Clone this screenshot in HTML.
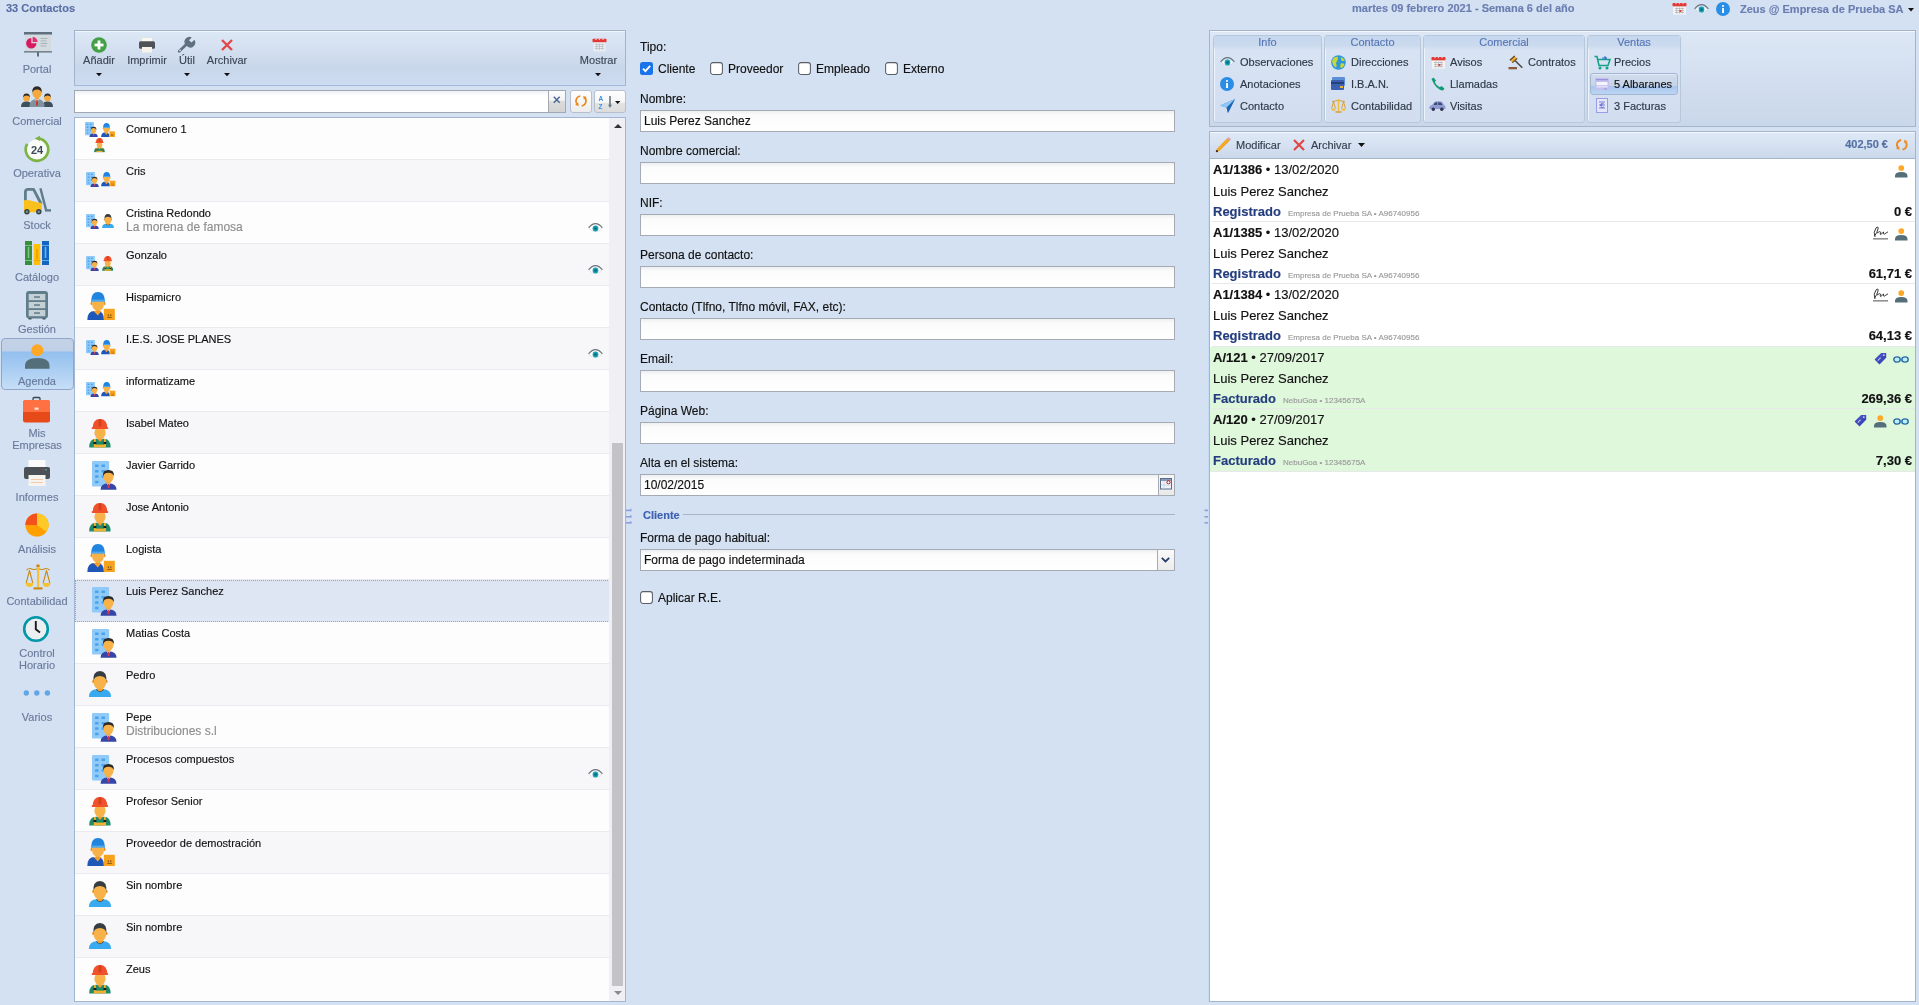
<!DOCTYPE html><html><head><meta charset="utf-8"><style>
html,body{margin:0;padding:0;}
body{width:1919px;height:1005px;overflow:hidden;position:relative;background:#d4e1f2;font-family:"Liberation Sans",sans-serif;}
.t{position:absolute;line-height:1;white-space:nowrap;-webkit-text-stroke-width:0.15px;}
#root{position:absolute;left:0;top:0;width:1919px;height:1005px;will-change:transform;}
.a{position:absolute;box-sizing:border-box;}
svg{position:absolute;overflow:visible;}
</style></head><body>
<svg width="0" height="0" style="position:absolute;left:0;top:0">
<defs>
<symbol id="iA" viewBox="0 0 26 30">
  <rect x="0" y="0" width="17.8" height="26.4" rx="1.3" fill="#8fcaf8"/>
  <g fill="#4aa2ec">
   <rect x="3.2" y="3.6" width="3.6" height="2.6" rx="0.4"/><rect x="9.9" y="3.6" width="3.6" height="2.6" rx="0.4"/>
   <rect x="3.2" y="9.2" width="3.6" height="2.6" rx="0.4"/><rect x="9.9" y="9.2" width="3.6" height="2.6" rx="0.4"/>
   <rect x="3.2" y="14.8" width="3.6" height="2.6" rx="0.4"/><rect x="9.9" y="14.8" width="3.6" height="2.6" rx="0.4"/>
   <rect x="3.2" y="20.4" width="3.6" height="2.6" rx="0.4"/>
  </g>
  <path d="M8.9 29.9 Q8.9 23 17.2 23 Q25.5 23 25.5 29.9Z" fill="#3446a8"/>
  <path d="M15.2 23.1 L17.2 26 L19.2 23.1Z" fill="#fff"/>
  <path d="M16.5 23.8 h1.4 l0.4 3.6 l-1.1 1.2 l-1.1 -1.2Z" fill="#d23c5a"/>
  <rect x="15.2" y="20" width="4" height="3.5" fill="#f29a2e"/>
  <ellipse cx="17.1" cy="16.3" rx="5.2" ry="6.2" fill="#f8b24a"/>
  <path d="M11.6 16 Q10.6 9.3 17.1 9.3 Q23.6 9.3 22.6 16 Q22 12.3 17.1 12.2 Q12.2 12.3 11.6 16Z" fill="#2b2b2b"/>
</symbol>
<symbol id="iB" viewBox="0 0 29 28">
  <path d="M0.3 28 Q0.3 19 7.5 19 h3 Q17 19 17 28Z" fill="#1f57b8"/>
  <path d="M6.5 19 L10.8 23.6 L14.6 19Z" fill="#f2a033"/>
  <rect x="8.8" y="15" width="4" height="5" fill="#f09a2a"/>
  <ellipse cx="4.6" cy="11.6" rx="1.2" ry="1.6" fill="#f09a2a"/><ellipse cx="17.4" cy="11.6" rx="1.2" ry="1.6" fill="#f09a2a"/>
  <ellipse cx="11" cy="12.4" rx="5.9" ry="6.6" fill="#f8b24a"/>
  <path d="M4.6 11 Q4.4 7 5.4 9.5Z M17.4 11 Q17.6 7 16.6 9.5Z" fill="#3a3a3a"/>
  <path d="M4.2 9.2 Q4.2 0 11 0 Q17.8 0 17.8 9.2Z" fill="#2185e0"/>
  <rect x="4.2" y="7.6" width="13.6" height="1.9" fill="#4aaaf2"/>
  <rect x="16.8" y="16.8" width="11" height="11.2" fill="#f7a21c"/>
  <rect x="20.8" y="22.3" width="1" height="2" fill="#7a4a10"/><rect x="23.3" y="22.3" width="1" height="2" fill="#7a4a10"/>
  <rect x="20.3" y="25.1" width="4.5" height="0.8" fill="#7a4a10"/>
</symbol>
<symbol id="iC" viewBox="0 0 22 29">
  <path d="M0.2 28.4 Q0.2 19.7 7 19.7 h8 Q21.6 19.7 21.6 28.4Z" fill="#1e8a6a"/>
  <rect x="4.8" y="25.6" width="12.2" height="2.8" fill="#f3b02c"/>
  <rect x="5" y="20" width="1.8" height="5.8" fill="#f3b02c"/><rect x="15" y="20" width="1.8" height="5.8" fill="#f3b02c"/>
  <rect x="4.5" y="23" width="2.8" height="2" fill="#1b1b1b"/><rect x="14.5" y="23" width="2.8" height="2" fill="#1b1b1b"/>
  <path d="M8 19.7 L11 23 L14 19.7Z" fill="#f09a2a"/>
  <rect x="9" y="16" width="4" height="4.5" fill="#f09a2a"/>
  <ellipse cx="11" cy="13.8" rx="5.6" ry="6.3" fill="#f8b24a"/>
  <path d="M3.6 9.5 Q3.6 0 11 0 Q18.4 0 18.4 9.5Z" fill="#f0512a"/>
  <rect x="9.6" y="0.3" width="2.8" height="7" fill="#d63f1c"/>
  <rect x="2.7" y="8" width="16.5" height="2" rx="0.8" fill="#f0512a"/>
</symbol>
<symbol id="iD" viewBox="0 0 22 27">
  <path d="M0 26 Q0 18.3 8 18.3 h6 Q22 18.3 22 26Z" fill="#3aaaf0"/>
  <path d="M6.8 18.3 Q11 24 15.2 18.3Z" fill="#17425a"/>
  <path d="M7.8 18.4 Q11 22.4 14.2 18.4 L13.6 14 h-5.2Z" fill="#f09a2a"/>
  <ellipse cx="4.3" cy="10.6" rx="1.2" ry="1.6" fill="#f09a2a"/><ellipse cx="17.5" cy="10.6" rx="1.2" ry="1.6" fill="#f09a2a"/>
  <ellipse cx="10.9" cy="11" rx="6.3" ry="7.4" fill="#f8b24a"/>
  <path d="M4.4 11 Q3.6 0 10.9 0 Q18.2 0 17.4 11 Q17 5.2 10.9 5 Q4.8 5.2 4.4 11Z" fill="#363d42"/>
</symbol>
</defs></svg>
<div id="root">
<div class="t" style="left:6px;top:2.69px;font-size:11px;color:#5a6ea4;font-weight:bold;">33 Contactos</div>
<div class="t" style="left:1352px;top:2.69px;font-size:11px;color:#6a7db0;font-weight:bold;">martes 09 febrero 2021 - Semana 6 del año</div>
<div class="t" style="left:1740px;top:3.69px;font-size:11px;color:#6a7db0;font-weight:bold;">Zeus @ Empresa de Prueba SA</div>
<svg style="left:1907.5px;top:8px" width="6" height="3.5" viewBox="0 0 6 3.5"><path d="M0 0H6L3 3.5Z" fill="#111"/></svg>
<svg style="left:1672px;top:2px" width="15" height="13" viewBox="0 0 15 13"><rect x="0.5" y="1" width="14" height="3.6" rx="0.8" fill="#e53935"/>
<circle cx="4" cy="1.6" r="0.7" fill="#fbe4e4"/><circle cx="7.5" cy="1.6" r="0.7" fill="#fbe4e4"/><circle cx="11" cy="1.6" r="0.7" fill="#fbe4e4"/>
<rect x="1" y="4.6" width="13" height="8" fill="#f3f3f3"/>
<g fill="#a9a9a9"><rect x="3" y="6" width="9" height="0.6"/><rect x="3" y="8.2" width="9" height="0.6"/><rect x="3" y="10.4" width="9" height="0.6"/>
<rect x="4.5" y="5.5" width="0.6" height="6"/><rect x="7.2" y="5.5" width="0.6" height="6"/><rect x="9.9" y="5.5" width="0.6" height="6"/></g>
<rect x="7.5" y="8" width="1.8" height="2" fill="#e53935"/></svg>
<svg style="left:1694px;top:3.8px" width="15.0" height="10.0" viewBox="0 0 15 10"><path d="M1.5 5.6 Q7.5 11.2 13.5 5.6" fill="none" stroke="#c9cdd2" stroke-width="0.7"/>
<path d="M2 5.4 Q7.5 0.5 13 5.4 Q7.5 10.5 2 5.4Z" fill="#fff"/>
<path d="M0.6 4.9 Q7.5 -3.6 14.4 4.9" fill="none" stroke="#6a737a" stroke-width="1.1"/>
<circle cx="7.5" cy="5.5" r="2.9" fill="#14a3b6"/><circle cx="7.5" cy="5.5" r="1.3" fill="#0a6776"/></svg>
<svg style="left:1716px;top:2px" width="14" height="14" viewBox="0 0 14 14"><circle cx="7" cy="7" r="7" fill="#2a8de6"/><rect x="6.1" y="6" width="1.9" height="5" fill="#fff"/><circle cx="7" cy="4" r="1.05" fill="#fff"/></svg>
<div class="a" style="left:1px;top:338px;width:73px;height:52px;border:1px solid #91a7c9;border-radius:4px;background:linear-gradient(#c3d2e6 0,#c0d0e6 12px,#93c0ef 13px,#a9cdf2 30px,#c6def7 100%);"></div>
<div class="t" style="left:-63px;width:200px;text-align:center;top:63.69px;font-size:11px;color:#6a7a9c;">Portal</div>
<div class="t" style="left:-63px;width:200px;text-align:center;top:115.69px;font-size:11px;color:#6a7a9c;">Comercial</div>
<div class="t" style="left:-63px;width:200px;text-align:center;top:167.69px;font-size:11px;color:#6a7a9c;">Operativa</div>
<div class="t" style="left:-63px;width:200px;text-align:center;top:219.69px;font-size:11px;color:#6a7a9c;">Stock</div>
<div class="t" style="left:-63px;width:200px;text-align:center;top:271.69px;font-size:11px;color:#6a7a9c;">Catálogo</div>
<div class="t" style="left:-63px;width:200px;text-align:center;top:323.69px;font-size:11px;color:#6a7a9c;">Gestión</div>
<div class="t" style="left:-63px;width:200px;text-align:center;top:375.69px;font-size:11px;color:#6a7a9c;">Agenda</div>
<div class="t" style="left:-63px;width:200px;text-align:center;top:427.69px;font-size:11px;color:#6a7a9c;">Mis</div>
<div class="t" style="left:-63px;width:200px;text-align:center;top:439.69px;font-size:11px;color:#6a7a9c;">Empresas</div>
<div class="t" style="left:-63px;width:200px;text-align:center;top:491.69px;font-size:11px;color:#6a7a9c;">Informes</div>
<div class="t" style="left:-63px;width:200px;text-align:center;top:543.69px;font-size:11px;color:#6a7a9c;">Análisis</div>
<div class="t" style="left:-63px;width:200px;text-align:center;top:595.69px;font-size:11px;color:#6a7a9c;">Contabilidad</div>
<div class="t" style="left:-63px;width:200px;text-align:center;top:647.69px;font-size:11px;color:#6a7a9c;">Control</div>
<div class="t" style="left:-63px;width:200px;text-align:center;top:659.69px;font-size:11px;color:#6a7a9c;">Horario</div>
<div class="t" style="left:-63px;width:200px;text-align:center;top:711.69px;font-size:11px;color:#6a7a9c;">Varios</div>
<svg style="left:24px;top:32px" width="28" height="25" viewBox="0 0 28 25"><rect x="0" y="0" width="28" height="2.7" fill="#5f707c"/>
<rect x="1" y="2.7" width="26" height="16.5" fill="#d3dbe0"/>
<path d="M7.3 11.3 V6.1 A5.2 5.2 0 1 0 12.5 11.3Z" fill="#d81b60"/>
<path d="M8.6 10 V5 A5 5 0 0 1 13.6 10Z" fill="#e0306e"/>
<g fill="#a3aeb5"><rect x="16.5" y="6" width="7" height="0.9"/><rect x="16.5" y="8.5" width="6" height="0.9"/><rect x="16.5" y="11" width="7" height="0.9"/><rect x="16.5" y="13.5" width="6" height="0.9"/></g>
<rect x="0" y="19.2" width="28" height="1.3" fill="#5f707c"/>
<rect x="13" y="20" width="2" height="4.5" fill="#5f707c"/></svg>
<svg style="left:21px;top:86px" width="32" height="21" viewBox="0 0 32 21"><g>
<ellipse cx="5.5" cy="12" rx="3.3" ry="3.6" fill="#f5a83c"/><path d="M2.2 11.5 Q2 7.6 5.5 7.6 Q9 7.6 8.8 11.5 Q8.2 9.6 5.5 9.5 Q2.8 9.6 2.2 11.5Z" fill="#2b2b2b"/>
<path d="M0 21 Q0 15.6 5.5 15.6 Q11 15.6 11 21Z" fill="#3d4f5a"/>
<ellipse cx="26.5" cy="12" rx="3.3" ry="3.6" fill="#f5a83c"/><path d="M23.2 11.5 Q23 7.6 26.5 7.6 Q30 7.6 29.8 11.5 Q29.2 9.6 26.5 9.5 Q23.8 9.6 23.2 11.5Z" fill="#2b2b2b"/>
<path d="M21 21 Q21 15.6 26.5 15.6 Q32 15.6 32 21Z" fill="#3d4f5a"/>
<path d="M8.5 21 Q8.5 13 16 13 Q23.5 13 23.5 21Z" fill="#7d939e"/>
<path d="M14 13.2 L16 16.5 L18 13.2Z" fill="#fff"/><path d="M15.3 14 h1.4 l0.4 4.8 l-1.1 1.2 l-1.1 -1.2Z" fill="#d32f2f"/>
<rect x="14.2" y="10" width="3.6" height="3.5" fill="#ee9a2e"/>
<ellipse cx="16" cy="7.2" rx="4.6" ry="5" fill="#f5a83c"/>
<path d="M11.2 7 Q10.8 0.3 16 0.3 Q21.2 0.3 20.8 7 Q20 3.6 16 3.5 Q12 3.6 11.2 7Z" fill="#2b2b2b"/>
</g></svg>
<svg style="left:24px;top:136px" width="26" height="26" viewBox="0 0 26 26"><circle cx="13" cy="13.5" r="10.2" fill="#f8fbf6"/>
<path d="M14.5 2.3 A11.3 11.3 0 1 1 3.2 7.85" fill="none" stroke="#7cb342" stroke-width="2.7"/>
<path d="M10.6 2.4 L16 -0.3 L16 5.1Z" fill="#7cb342"/>
<text x="13" y="17.6" text-anchor="middle" font-family="Liberation Sans" font-weight="bold" font-size="11" fill="#3d4a5c">24</text></svg>
<svg style="left:24px;top:188px" width="27" height="27" viewBox="0 0 27 27"><path d="M1.4 13 V4 Q1.4 1.4 4 1.4 H9.6 L17.2 16" fill="none" stroke="#607d8b" stroke-width="2.8" stroke-linejoin="round"/>
<path d="M16.4 0.2 L22.2 22.4" fill="none" stroke="#607d8b" stroke-width="2.4"/>
<rect x="21" y="21.2" width="6" height="2.4" fill="#607d8b"/>
<path d="M0 12.2 Q4.5 11.6 8 13 Q12.5 14.6 17.8 15 V24.3 H0Z" fill="#fbbf1c"/>
<circle cx="2.9" cy="23.7" r="2.7" fill="#33444c"/><circle cx="2.9" cy="23.7" r="1.2" fill="#7d8f99"/>
<circle cx="14.8" cy="23.7" r="2.7" fill="#33444c"/><circle cx="14.8" cy="23.7" r="1.2" fill="#7d8f99"/></svg>
<svg style="left:25px;top:241px" width="24" height="24" viewBox="0 0 24 24"><rect x="0" y="0" width="7" height="24" fill="#388e3c"/><rect x="2.7" y="6" width="1.6" height="11" fill="#7cc47f"/>
<rect x="0" y="4" width="7" height="0.9" fill="#8bc78e"/><rect x="0" y="19" width="7" height="0.9" fill="#8bc78e"/>
<rect x="8.7" y="3" width="6.6" height="21" fill="#ffc107"/><rect x="11.2" y="8" width="1.6" height="10" fill="#f59a00"/>
<rect x="8.7" y="19" width="6.6" height="0.9" fill="#f5a000"/>
<rect x="17" y="0" width="7" height="24" fill="#1565c0"/><rect x="19.7" y="6" width="1.6" height="11" fill="#64b5f6"/>
<rect x="17" y="4" width="7" height="0.9" fill="#64b5f6"/><rect x="17" y="19" width="7" height="0.9" fill="#64b5f6"/></svg>
<svg style="left:26px;top:291px" width="22" height="29" viewBox="0 0 22 29"><rect x="0" y="0" width="22" height="27.5" rx="3" fill="#607d8b"/>
<rect x="2.7" y="3" width="16.6" height="6.2" fill="#c5cfd6"/><rect x="2.7" y="11" width="16.6" height="6.2" fill="#c5cfd6"/><rect x="2.7" y="19" width="16.6" height="6.2" fill="#c5cfd6"/>
<rect x="8" y="5.3" width="6" height="1.5" fill="#607d8b"/><rect x="8" y="13.3" width="6" height="1.5" fill="#607d8b"/><rect x="8" y="21.3" width="6" height="1.5" fill="#607d8b"/>
<rect x="2.5" y="27" width="3" height="1.5" fill="#455a64"/><rect x="16.5" y="27" width="3" height="1.5" fill="#455a64"/></svg>
<svg style="left:25px;top:344px" width="25" height="25" viewBox="0 0 25 25"><circle cx="12.3" cy="6.2" r="6" fill="#ffa726"/>
<path d="M0 24.8 V22 Q0 14 12.3 14 Q24.5 14 24.5 22 V24.8Z" fill="#546e7a"/></svg>
<svg style="left:23px;top:397px" width="27" height="26" viewBox="0 0 27 26"><path d="M10 3.5 V1.6 Q10 0.5 11.1 0.5 H15.9 Q17 0.5 17 1.6 V3.5" fill="none" stroke="#37474f" stroke-width="1.3"/>
<rect x="0" y="3" width="27" height="22.5" rx="2.5" fill="#e64a19"/>
<rect x="0" y="3" width="27" height="12" rx="2.5" fill="#ff7043"/><rect x="0" y="12" width="27" height="3" fill="#ff7043"/>
<rect x="11.5" y="10.5" width="4" height="2.3" fill="#fde2d6"/></svg>
<svg style="left:24px;top:460px" width="26" height="26" viewBox="0 0 26 26"><rect x="4.5" y="0" width="17" height="8" fill="#fafafa"/>
<rect x="0" y="7" width="26" height="12" rx="2" fill="#4a5056"/>
<circle cx="22" cy="9.8" r="0.8" fill="#3ecfb0"/><rect x="18" y="9.3" width="2" height="0.8" fill="#b04848"/>
<rect x="4.5" y="15" width="17" height="11" fill="#f7f3ee"/>
<rect x="7" y="19" width="12" height="1" fill="#f3c9a8"/><rect x="7" y="22" width="12" height="1" fill="#f3c9a8"/></svg>
<svg style="left:25px;top:513px" width="24" height="24" viewBox="0 0 24 24"><circle cx="12" cy="12" r="11.6" fill="#ffa000"/>
<path d="M12 12 V0.4 A11.6 11.6 0 0 1 21.4 18.8Z" fill="#ffca28"/>
<path d="M12 12 H0.4 A11.6 11.6 0 0 1 12 0.4Z" fill="#f4511e"/></svg>
<svg style="left:25px;top:564px" width="26" height="26" viewBox="0 0 26 26"><g fill="none" stroke="#c98a14" stroke-width="1.1">
<path d="M1.5 6 Q4 4 6 4.8 Q9 6.3 13 4.5 Q17 6.3 20 4.8 Q22 4 24.5 6"/>
<path d="M4.5 6.5 L1.2 19 M4.5 6.5 L7.8 19 M21.5 6.5 L18.2 19 M21.5 6.5 L24.8 19"/></g>
<circle cx="13" cy="2" r="1.8" fill="#c98a14"/>
<rect x="12" y="3" width="2.2" height="20" fill="#fbc02d"/>
<path d="M0.5 19 H8.5 Q8 23 4.5 23 Q1 23 0.5 19Z" fill="#fbc02d"/>
<path d="M17.5 19 H25.5 Q25 23 21.5 23 Q18 23 17.5 19Z" fill="#fbc02d"/>
<rect x="8.5" y="23.3" width="9" height="2.2" fill="#c98a14"/></svg>
<svg style="left:23px;top:616px" width="26" height="26" viewBox="0 0 26 26"><circle cx="13" cy="13" r="11.8" fill="#eceff1" stroke="#0097a7" stroke-width="2.6"/>
<path d="M12.8 5 V13.2 L17 16.5" fill="none" stroke="#1b1b1b" stroke-width="1.9"/></svg>
<svg style="left:23px;top:690px" width="28" height="6" viewBox="0 0 28 6"><circle cx="3.3" cy="3" r="2.7" fill="#62a6e6"/><circle cx="13.8" cy="3" r="2.7" fill="#62a6e6"/><circle cx="24.4" cy="3" r="2.7" fill="#62a6e6"/></svg>
<div class="a" style="left:74px;top:30px;width:552px;height:56px;border:1px solid #a3b3c9;border-bottom-color:#a2b9dc;background:linear-gradient(#dde8f6 0%,#d5e1f1 30%,#c9d7eb 68%,#cddcf1 100%);box-shadow:inset 0 1px 0 #eef5fc;"></div>
<div class="t" style="left:-1px;width:200px;text-align:center;top:54.69px;font-size:11px;color:#3b4757;">Añadir</div>
<svg style="left:95.5px;top:73px" width="6" height="3.2" viewBox="0 0 6 3.2"><path d="M0 0H6L3 3.2Z" fill="#111"/></svg>
<div class="t" style="left:47px;width:200px;text-align:center;top:54.69px;font-size:11px;color:#3b4757;">Imprimir</div>
<div class="t" style="left:87px;width:200px;text-align:center;top:54.69px;font-size:11px;color:#3b4757;">Útil</div>
<svg style="left:183.5px;top:73px" width="6" height="3.2" viewBox="0 0 6 3.2"><path d="M0 0H6L3 3.2Z" fill="#111"/></svg>
<div class="t" style="left:127px;width:200px;text-align:center;top:54.69px;font-size:11px;color:#3b4757;">Archivar</div>
<svg style="left:223.5px;top:73px" width="6" height="3.2" viewBox="0 0 6 3.2"><path d="M0 0H6L3 3.2Z" fill="#111"/></svg>
<div class="t" style="left:498.5px;width:200px;text-align:center;top:54.69px;font-size:11px;color:#3b4757;">Mostrar</div>
<svg style="left:595.0px;top:73px" width="6" height="3.2" viewBox="0 0 6 3.2"><path d="M0 0H6L3 3.2Z" fill="#111"/></svg>
<svg style="left:91px;top:37px" width="16" height="16" viewBox="0 0 16 16"><circle cx="8" cy="8" r="7.8" fill="#43a047"/><rect x="6.6" y="3.5" width="2.8" height="9" fill="#fff"/><rect x="3.5" y="6.6" width="9" height="2.8" fill="#fff"/></svg>
<svg style="left:139px;top:38px" width="16" height="15" viewBox="0 0 16 15"><rect x="3" y="0" width="10" height="4" fill="#faf7ee"/>
<rect x="0" y="3.3" width="16" height="7.5" rx="1.5" fill="#4f5357"/>
<rect x="3" y="9" width="10" height="5.5" fill="#f7f3ea"/></svg>
<svg style="left:178px;top:37px" width="17" height="16" viewBox="0 0 17 16"><path d="M1.2 14.2 L8.5 7.2" stroke="#5f7180" stroke-width="2.8" stroke-linecap="round"/>
<path d="M7.3 7.6 A5 5 0 0 1 13.8 0.4 L11 3.3 L13.5 5.6 L16.4 2.8 A5 5 0 0 1 9.3 9.6Z" fill="#5f7180"/>
<circle cx="2" cy="13.4" r="0.8" fill="#e7edf4"/></svg>
<svg style="left:221px;top:39px" width="12" height="12" viewBox="0 0 12 12"><path d="M1 1L11 11M11 1L1 11" stroke="#e04848" stroke-width="2.4"/></svg>
<svg style="left:592px;top:37.5px" width="15" height="14" viewBox="0 0 15 14"><rect x="0.5" y="0.8" width="14" height="3.6" rx="0.8" fill="#e53935"/>
<circle cx="4" cy="1.4" r="0.6" fill="#fbe4e4"/><circle cx="7.5" cy="1.4" r="0.6" fill="#fbe4e4"/><circle cx="11" cy="1.4" r="0.6" fill="#fbe4e4"/>
<rect x="1.5" y="4.4" width="12" height="9" fill="#e9edf1"/>
<g fill="#aeb8c0"><rect x="3" y="6" width="9" height="0.6"/><rect x="3" y="8.2" width="9" height="0.6"/><rect x="3" y="10.4" width="9" height="0.6"/>
<rect x="4.5" y="5.5" width="0.6" height="6.5"/><rect x="7.2" y="5.5" width="0.6" height="6.5"/><rect x="9.9" y="5.5" width="0.6" height="6.5"/></g></svg>
<div class="a" style="left:74px;top:90px;width:475px;height:23px;border:1px solid #a3a9b2;border-right:none;background:linear-gradient(#eef0f3 0,#fff 5px,#fff 100%);"></div>
<div class="a" style="left:548px;top:90px;width:18px;height:23px;border:1px solid #a3a9b2;background:linear-gradient(#fdfdfd 0,#f3f3f3 45%,#dcdcdc 46%,#d3d3d3 100%);"></div>
<svg style="left:553px;top:96px" width="7.5" height="7.5" viewBox="0 0 7.5 7.5"><path d="M0.8 0.8L6.7 6.7M6.7 0.8L0.8 6.7" stroke="#486a98" stroke-width="1.5"/></svg>
<div class="a" style="left:570px;top:90px;width:22px;height:23px;border:1px solid #b9bfc8;border-radius:3px;background:linear-gradient(#fefefe 0,#f7f7f7 50%,#ececec 100%);"></div>
<svg style="left:573.8px;top:94.3px" width="14" height="14" viewBox="0 0 14 14"><path d="M6.30 2.05 A5 5 0 0 0 3.28 10.35" fill="none" stroke="#ea8a1e" stroke-width="1.6"/><path d="M4.78 12.01 L1.16 10.97 L4.13 8.29Z" fill="#ea8a1e"/><path d="M7.70 11.95 A5 5 0 0 0 10.72 3.65" fill="none" stroke="#ea8a1e" stroke-width="1.6"/><path d="M9.22 1.99 L12.84 3.03 L9.87 5.71Z" fill="#ea8a1e"/></svg>
<div class="a" style="left:594px;top:90px;width:32px;height:23px;border:1px solid #b9bfc8;border-radius:3px;background:linear-gradient(#fefefe 0,#f7f7f7 54%,#e4e4e4 57%,#dcdcdc 100%);"></div>
<div class="t" style="left:598.6px;top:95.3px;font-size:6.5px;font-weight:bold;color:#3d90e2;line-height:7.5px;-webkit-text-stroke-width:0;">A<br>Z</div>
<svg style="left:607.6px;top:95.7px" width="4" height="12" viewBox="0 0 4 12"><rect x="1.2" y="0" width="1.6" height="9.5" fill="#6b7780"/><path d="M0 8.8H4L2 12Z" fill="#6b7780"/></svg>
<svg style="left:614.8px;top:101px" width="5.4" height="3" viewBox="0 0 5.4 3"><path d="M0 0H5.4L2.7 3Z" fill="#111"/></svg>
<div class="a" style="left:74px;top:117px;width:552px;height:885px;border:1px solid #a2b6d2;background:#fff;"></div>
<div class="a" style="left:75px;top:118px;width:534px;height:42px;background:#fdfdfe;border-bottom:1px solid #ebebef;"></div>
<div class="t" style="left:126px;top:123.69px;font-size:11px;color:#111;">Comunero 1</div>
<svg style="left:84.5px;top:122px" width="13" height="15"><use href="#iA" width="13" height="15"/></svg>
<svg style="left:101px;top:123px" width="14.5" height="14"><use href="#iB" width="14.5" height="14"/></svg>
<svg style="left:94px;top:138px" width="11" height="14.5"><use href="#iC" width="11" height="14.5"/></svg>
<div class="a" style="left:75px;top:160px;width:534px;height:42px;background:#f7f7fa;border-bottom:1px solid #ebebef;"></div>
<div class="t" style="left:126px;top:165.69px;font-size:11px;color:#111;">Cris</div>
<svg style="left:85.5px;top:172px" width="13" height="15"><use href="#iA" width="13" height="15"/></svg>
<svg style="left:100.5px;top:172px" width="15" height="14.5"><use href="#iB" width="15" height="14.5"/></svg>
<div class="a" style="left:75px;top:202px;width:534px;height:42px;background:#fdfdfe;border-bottom:1px solid #ebebef;"></div>
<div class="t" style="left:126px;top:207.69px;font-size:11px;color:#111;">Cristina Redondo</div>
<div class="t" style="left:126px;top:220.84px;font-size:12px;color:#8f8f8f;">La morena de famosa</div>
<svg style="left:85.5px;top:214px" width="13" height="15"><use href="#iA" width="13" height="15"/></svg>
<svg style="left:101.5px;top:214px" width="12" height="14.5"><use href="#iD" width="12" height="14.5"/></svg>
<svg style="left:588px;top:223px" width="15.0" height="10.0" viewBox="0 0 15 10"><path d="M1.5 5.6 Q7.5 11.2 13.5 5.6" fill="none" stroke="#c9cdd2" stroke-width="0.7"/>
<path d="M2 5.4 Q7.5 0.5 13 5.4 Q7.5 10.5 2 5.4Z" fill="#fff"/>
<path d="M0.6 4.9 Q7.5 -3.6 14.4 4.9" fill="none" stroke="#6a737a" stroke-width="1.1"/>
<circle cx="7.5" cy="5.5" r="2.9" fill="#14a3b6"/><circle cx="7.5" cy="5.5" r="1.3" fill="#0a6776"/></svg>
<div class="a" style="left:75px;top:244px;width:534px;height:42px;background:#f7f7fa;border-bottom:1px solid #ebebef;"></div>
<div class="t" style="left:126px;top:249.69px;font-size:11px;color:#111;">Gonzalo</div>
<svg style="left:85.5px;top:256px" width="13" height="15"><use href="#iA" width="13" height="15"/></svg>
<svg style="left:101.5px;top:256px" width="11.5" height="15"><use href="#iC" width="11.5" height="15"/></svg>
<svg style="left:588px;top:265px" width="15.0" height="10.0" viewBox="0 0 15 10"><path d="M1.5 5.6 Q7.5 11.2 13.5 5.6" fill="none" stroke="#c9cdd2" stroke-width="0.7"/>
<path d="M2 5.4 Q7.5 0.5 13 5.4 Q7.5 10.5 2 5.4Z" fill="#fff"/>
<path d="M0.6 4.9 Q7.5 -3.6 14.4 4.9" fill="none" stroke="#6a737a" stroke-width="1.1"/>
<circle cx="7.5" cy="5.5" r="2.9" fill="#14a3b6"/><circle cx="7.5" cy="5.5" r="1.3" fill="#0a6776"/></svg>
<div class="a" style="left:75px;top:286px;width:534px;height:42px;background:#fdfdfe;border-bottom:1px solid #ebebef;"></div>
<div class="t" style="left:126px;top:291.69px;font-size:11px;color:#111;">Hispamicro</div>
<svg style="left:86.5px;top:292px" width="29" height="28"><use href="#iB" width="29" height="28"/></svg>
<div class="a" style="left:75px;top:328px;width:534px;height:42px;background:#f7f7fa;border-bottom:1px solid #ebebef;"></div>
<div class="t" style="left:126px;top:333.69px;font-size:11px;color:#111;">I.E.S. JOSE PLANES</div>
<svg style="left:85.5px;top:340px" width="13" height="15"><use href="#iA" width="13" height="15"/></svg>
<svg style="left:100.5px;top:340px" width="15" height="14.5"><use href="#iB" width="15" height="14.5"/></svg>
<svg style="left:588px;top:349px" width="15.0" height="10.0" viewBox="0 0 15 10"><path d="M1.5 5.6 Q7.5 11.2 13.5 5.6" fill="none" stroke="#c9cdd2" stroke-width="0.7"/>
<path d="M2 5.4 Q7.5 0.5 13 5.4 Q7.5 10.5 2 5.4Z" fill="#fff"/>
<path d="M0.6 4.9 Q7.5 -3.6 14.4 4.9" fill="none" stroke="#6a737a" stroke-width="1.1"/>
<circle cx="7.5" cy="5.5" r="2.9" fill="#14a3b6"/><circle cx="7.5" cy="5.5" r="1.3" fill="#0a6776"/></svg>
<div class="a" style="left:75px;top:370px;width:534px;height:42px;background:#fdfdfe;border-bottom:1px solid #ebebef;"></div>
<div class="t" style="left:126px;top:375.69px;font-size:11px;color:#111;">informatizame</div>
<svg style="left:85.5px;top:382px" width="13" height="15"><use href="#iA" width="13" height="15"/></svg>
<svg style="left:100.5px;top:382px" width="15" height="14.5"><use href="#iB" width="15" height="14.5"/></svg>
<div class="a" style="left:75px;top:412px;width:534px;height:42px;background:#f7f7fa;border-bottom:1px solid #ebebef;"></div>
<div class="t" style="left:126px;top:417.69px;font-size:11px;color:#111;">Isabel Mateo</div>
<svg style="left:89px;top:418.5px" width="22" height="29"><use href="#iC" width="22" height="29"/></svg>
<div class="a" style="left:75px;top:454px;width:534px;height:42px;background:#fdfdfe;border-bottom:1px solid #ebebef;"></div>
<div class="t" style="left:126px;top:459.69px;font-size:11px;color:#111;">Javier Garrido</div>
<svg style="left:91.5px;top:461px" width="25" height="29"><use href="#iA" width="25" height="29"/></svg>
<div class="a" style="left:75px;top:496px;width:534px;height:42px;background:#f7f7fa;border-bottom:1px solid #ebebef;"></div>
<div class="t" style="left:126px;top:501.69px;font-size:11px;color:#111;">Jose Antonio</div>
<svg style="left:89px;top:502.5px" width="22" height="29"><use href="#iC" width="22" height="29"/></svg>
<div class="a" style="left:75px;top:538px;width:534px;height:42px;background:#fdfdfe;border-bottom:1px solid #ebebef;"></div>
<div class="t" style="left:126px;top:543.69px;font-size:11px;color:#111;">Logista</div>
<svg style="left:86.5px;top:544px" width="29" height="28"><use href="#iB" width="29" height="28"/></svg>
<div class="a" style="left:75px;top:580px;width:535px;height:42px;background:linear-gradient(#dde5f2,#dfe7f5);border:1px dotted #98a3bd;"></div>
<div class="t" style="left:126px;top:585.69px;font-size:11px;color:#111;">Luis Perez Sanchez</div>
<svg style="left:91.5px;top:587px" width="25" height="29"><use href="#iA" width="25" height="29"/></svg>
<div class="a" style="left:75px;top:622px;width:534px;height:42px;background:#fdfdfe;border-bottom:1px solid #ebebef;"></div>
<div class="t" style="left:126px;top:627.69px;font-size:11px;color:#111;">Matias Costa</div>
<svg style="left:91.5px;top:629px" width="25" height="29"><use href="#iA" width="25" height="29"/></svg>
<div class="a" style="left:75px;top:664px;width:534px;height:42px;background:#f7f7fa;border-bottom:1px solid #ebebef;"></div>
<div class="t" style="left:126px;top:669.69px;font-size:11px;color:#111;">Pedro</div>
<svg style="left:89px;top:670.5px" width="22" height="27"><use href="#iD" width="22" height="27"/></svg>
<div class="a" style="left:75px;top:706px;width:534px;height:42px;background:#fdfdfe;border-bottom:1px solid #ebebef;"></div>
<div class="t" style="left:126px;top:711.69px;font-size:11px;color:#111;">Pepe</div>
<div class="t" style="left:126px;top:724.84px;font-size:12px;color:#8f8f8f;">Distribuciones s.l</div>
<svg style="left:91.5px;top:713px" width="25" height="29"><use href="#iA" width="25" height="29"/></svg>
<div class="a" style="left:75px;top:748px;width:534px;height:42px;background:#f7f7fa;border-bottom:1px solid #ebebef;"></div>
<div class="t" style="left:126px;top:753.69px;font-size:11px;color:#111;">Procesos compuestos</div>
<svg style="left:91.5px;top:755px" width="25" height="29"><use href="#iA" width="25" height="29"/></svg>
<svg style="left:588px;top:769px" width="15.0" height="10.0" viewBox="0 0 15 10"><path d="M1.5 5.6 Q7.5 11.2 13.5 5.6" fill="none" stroke="#c9cdd2" stroke-width="0.7"/>
<path d="M2 5.4 Q7.5 0.5 13 5.4 Q7.5 10.5 2 5.4Z" fill="#fff"/>
<path d="M0.6 4.9 Q7.5 -3.6 14.4 4.9" fill="none" stroke="#6a737a" stroke-width="1.1"/>
<circle cx="7.5" cy="5.5" r="2.9" fill="#14a3b6"/><circle cx="7.5" cy="5.5" r="1.3" fill="#0a6776"/></svg>
<div class="a" style="left:75px;top:790px;width:534px;height:42px;background:#fdfdfe;border-bottom:1px solid #ebebef;"></div>
<div class="t" style="left:126px;top:795.69px;font-size:11px;color:#111;">Profesor Senior</div>
<svg style="left:89px;top:796.5px" width="22" height="29"><use href="#iC" width="22" height="29"/></svg>
<div class="a" style="left:75px;top:832px;width:534px;height:42px;background:#f7f7fa;border-bottom:1px solid #ebebef;"></div>
<div class="t" style="left:126px;top:837.69px;font-size:11px;color:#111;">Proveedor de demostración</div>
<svg style="left:86.5px;top:838px" width="29" height="28"><use href="#iB" width="29" height="28"/></svg>
<div class="a" style="left:75px;top:874px;width:534px;height:42px;background:#fdfdfe;border-bottom:1px solid #ebebef;"></div>
<div class="t" style="left:126px;top:879.69px;font-size:11px;color:#111;">Sin nombre</div>
<svg style="left:89px;top:880.5px" width="22" height="27"><use href="#iD" width="22" height="27"/></svg>
<div class="a" style="left:75px;top:916px;width:534px;height:42px;background:#f7f7fa;border-bottom:1px solid #ebebef;"></div>
<div class="t" style="left:126px;top:921.69px;font-size:11px;color:#111;">Sin nombre</div>
<svg style="left:89px;top:922.5px" width="22" height="27"><use href="#iD" width="22" height="27"/></svg>
<div class="a" style="left:75px;top:958px;width:534px;height:42px;background:#fdfdfe;"></div>
<div class="t" style="left:126px;top:963.69px;font-size:11px;color:#111;">Zeus</div>
<svg style="left:89px;top:964.5px" width="22" height="29"><use href="#iC" width="22" height="29"/></svg>
<div class="a" style="left:609px;top:118px;width:16px;height:883px;background:#f0eff3;"></div>
<div class="a" style="left:612px;top:443px;width:11px;height:543px;background:#c3c2c6;"></div>
<svg style="left:613.5px;top:123.5px" width="8" height="4" viewBox="0 0 8 4"><path d="M0 4H8L4 0Z" fill="#333"/></svg>
<svg style="left:613.5px;top:990.5px" width="8" height="4" viewBox="0 0 8 4"><path d="M0 0H8L4 4Z" fill="#8a8a8e"/></svg>
<div class="t" style="left:640px;top:40.84px;font-size:12px;color:#111;">Tipo:</div>
<svg style="left:640px;top:62px" width="13" height="13" viewBox="0 0 13 13"><rect x="0" y="0" width="13" height="13" rx="2.5" fill="#1a73e8"/><path d="M3 6.6 L5.4 9.2 L10.2 3.8" fill="none" stroke="#fff" stroke-width="1.9"/></svg>
<div class="t" style="left:658px;top:62.84px;font-size:12px;color:#111;">Cliente</div>
<svg style="left:710px;top:62px" width="13" height="13" viewBox="0 0 13 13"><rect x="0.6" y="0.6" width="11.8" height="11.8" rx="2.3" fill="#fff" stroke="#5a5e66" stroke-width="1.05"/></svg>
<div class="t" style="left:728px;top:62.84px;font-size:12px;color:#111;">Proveedor</div>
<svg style="left:798px;top:62px" width="13" height="13" viewBox="0 0 13 13"><rect x="0.6" y="0.6" width="11.8" height="11.8" rx="2.3" fill="#fff" stroke="#5a5e66" stroke-width="1.05"/></svg>
<div class="t" style="left:816px;top:62.84px;font-size:12px;color:#111;">Empleado</div>
<svg style="left:885px;top:62px" width="13" height="13" viewBox="0 0 13 13"><rect x="0.6" y="0.6" width="11.8" height="11.8" rx="2.3" fill="#fff" stroke="#5a5e66" stroke-width="1.05"/></svg>
<div class="t" style="left:903px;top:62.84px;font-size:12px;color:#111;">Externo</div>
<div class="t" style="left:640px;top:92.84px;font-size:12px;color:#111;">Nombre:</div>
<div class="a" style="left:640px;top:110px;width:535px;height:22px;border:1px solid #a6abb3;background:linear-gradient(#eceef1 0,#fbfbfc 4px,#fff 100%);"></div><div class="t" style="left:644px;top:114.84px;font-size:12px;color:#111;">Luis Perez Sanchez</div>
<div class="t" style="left:640px;top:144.84px;font-size:12px;color:#111;">Nombre comercial:</div>
<div class="a" style="left:640px;top:162px;width:535px;height:22px;border:1px solid #a6abb3;background:linear-gradient(#eceef1 0,#fbfbfc 4px,#fff 100%);"></div>
<div class="t" style="left:640px;top:196.84px;font-size:12px;color:#111;">NIF:</div>
<div class="a" style="left:640px;top:214px;width:535px;height:22px;border:1px solid #a6abb3;background:linear-gradient(#eceef1 0,#fbfbfc 4px,#fff 100%);"></div>
<div class="t" style="left:640px;top:248.84px;font-size:12px;color:#111;">Persona de contacto:</div>
<div class="a" style="left:640px;top:266px;width:535px;height:22px;border:1px solid #a6abb3;background:linear-gradient(#eceef1 0,#fbfbfc 4px,#fff 100%);"></div>
<div class="t" style="left:640px;top:300.84px;font-size:12px;color:#111;">Contacto (Tlfno, Tlfno móvil, FAX, etc):</div>
<div class="a" style="left:640px;top:318px;width:535px;height:22px;border:1px solid #a6abb3;background:linear-gradient(#eceef1 0,#fbfbfc 4px,#fff 100%);"></div>
<div class="t" style="left:640px;top:352.84px;font-size:12px;color:#111;">Email:</div>
<div class="a" style="left:640px;top:370px;width:535px;height:22px;border:1px solid #a6abb3;background:linear-gradient(#eceef1 0,#fbfbfc 4px,#fff 100%);"></div>
<div class="t" style="left:640px;top:404.84px;font-size:12px;color:#111;">Página Web:</div>
<div class="a" style="left:640px;top:422px;width:535px;height:22px;border:1px solid #a6abb3;background:linear-gradient(#eceef1 0,#fbfbfc 4px,#fff 100%);"></div>
<div class="t" style="left:640px;top:456.84px;font-size:12px;color:#111;">Alta en el sistema:</div>
<div class="a" style="left:640px;top:474px;width:519px;height:22px;border:1px solid #a6abb3;border-right:none;background:linear-gradient(#eceef1 0,#fbfbfc 4px,#fff 100%);"></div>
<div class="t" style="left:644px;top:478.84px;font-size:12px;color:#111;">10/02/2015</div>
<div class="a" style="left:1158px;top:474px;width:17px;height:22px;border:1px solid #a6abb3;background:linear-gradient(#f7f7f7,#e9e9e9);"></div>
<svg style="left:1160px;top:478px" width="12" height="12" viewBox="0 0 12 12"><rect x="0.5" y="0.5" width="11" height="10.5" fill="#eef2f8" stroke="#5a6d8c" stroke-width="1"/><rect x="1" y="1" width="10" height="2" fill="#8898b5"/><circle cx="8.5" cy="4.3" r="1.6" fill="#fff" stroke="#b01020" stroke-width="1"/><path d="M4 3 V11 M1 7 H11" stroke="#c9d3e3" stroke-width="0.8"/></svg>
<div class="t" style="left:643px;top:509.69px;font-size:11px;color:#3c5fb0;font-weight:bold;">Cliente</div>
<div class="a" style="left:683px;top:514px;width:492px;height:1px;background:#a9b5c6;"></div>
<div class="t" style="left:640px;top:531.84px;font-size:12px;color:#111;">Forma de pago habitual:</div>
<div class="a" style="left:640px;top:549px;width:519px;height:22px;border:1px solid #a6abb3;border-right:none;background:linear-gradient(#eceef1 0,#fbfbfc 4px,#fff 100%);"></div>
<div class="t" style="left:644px;top:553.84px;font-size:12px;color:#111;">Forma de pago indeterminada</div>
<div class="a" style="left:1157px;top:549px;width:18px;height:22px;border:1px solid #a6abb3;background:linear-gradient(#fafafa,#ececec);"></div>
<svg style="left:1161px;top:557px" width="9" height="6" viewBox="0 0 9 6"><path d="M0.8 0.8 L4.5 4.5 L8.2 0.8" fill="none" stroke="#2a3c70" stroke-width="1.8"/></svg>
<svg style="left:640px;top:591px" width="13" height="13" viewBox="0 0 13 13"><rect x="0.6" y="0.6" width="11.8" height="11.8" rx="2.3" fill="#fff" stroke="#5a5e66" stroke-width="1.05"/></svg>
<div class="t" style="left:658px;top:591.84px;font-size:12px;color:#111;">Aplicar R.E.</div>
<svg style="left:625.5px;top:508px" width="6" height="17" viewBox="0 0 6 17"><g fill="#8c9fdf"><rect x="0" y="1.6" width="5.3" height="1.6"/><rect x="0" y="8" width="5.3" height="1.6"/><rect x="0" y="14" width="5.3" height="1.6"/><rect x="4.4" y="0.6" width="1" height="2.6"/><rect x="4.4" y="7" width="1" height="2.6"/><rect x="4.4" y="13" width="1" height="2.6"/></g></svg>
<svg style="left:1203.5px;top:508px" width="6" height="17" viewBox="0 0 6 17"><g fill="#8c9fdf"><rect x="0.5" y="1.6" width="5.3" height="1.6"/><rect x="0.5" y="8" width="5.3" height="1.6"/><rect x="0.5" y="14" width="5.3" height="1.6"/><rect x="4.5" y="0.6" width="1" height="2.6"/><rect x="4.5" y="7" width="1" height="2.6"/><rect x="4.5" y="13" width="1" height="2.6"/></g></svg>
<div class="a" style="left:1209px;top:30px;width:707px;height:97px;border:1px solid #a5b4c9;background:linear-gradient(#dde7f5 0,#d3dff0 50%,#c9d7ea 100%);box-shadow:inset 0 1px 0 #f2f7fd;"></div>
<div class="a" style="left:1213px;top:35px;width:109px;height:88px;border:1px solid #b7c7dc;border-radius:3px;background:linear-gradient(#d9e5f4 0,#d2def0 100%);box-shadow:inset 1px 1px 0 #eef4fb;"></div>
<div class="a" style="left:1214px;top:36px;width:107px;height:14px;background:linear-gradient(#c6d8ef,#cbdaee 70%,rgba(210,222,239,0));"></div>
<div class="t" style="left:1167.5px;width:200px;text-align:center;top:36.69px;font-size:11px;color:#5876b6;">Info</div>
<div class="a" style="left:1324px;top:35px;width:97px;height:88px;border:1px solid #b7c7dc;border-radius:3px;background:linear-gradient(#d9e5f4 0,#d2def0 100%);box-shadow:inset 1px 1px 0 #eef4fb;"></div>
<div class="a" style="left:1325px;top:36px;width:95px;height:14px;background:linear-gradient(#c6d8ef,#cbdaee 70%,rgba(210,222,239,0));"></div>
<div class="t" style="left:1272.5px;width:200px;text-align:center;top:36.69px;font-size:11px;color:#5876b6;">Contacto</div>
<div class="a" style="left:1423px;top:35px;width:162px;height:88px;border:1px solid #b7c7dc;border-radius:3px;background:linear-gradient(#d9e5f4 0,#d2def0 100%);box-shadow:inset 1px 1px 0 #eef4fb;"></div>
<div class="a" style="left:1424px;top:36px;width:160px;height:14px;background:linear-gradient(#c6d8ef,#cbdaee 70%,rgba(210,222,239,0));"></div>
<div class="t" style="left:1404.0px;width:200px;text-align:center;top:36.69px;font-size:11px;color:#5876b6;">Comercial</div>
<div class="a" style="left:1587px;top:35px;width:94px;height:88px;border:1px solid #b7c7dc;border-radius:3px;background:linear-gradient(#d9e5f4 0,#d2def0 100%);box-shadow:inset 1px 1px 0 #eef4fb;"></div>
<div class="a" style="left:1588px;top:36px;width:92px;height:14px;background:linear-gradient(#c6d8ef,#cbdaee 70%,rgba(210,222,239,0));"></div>
<div class="t" style="left:1534.0px;width:200px;text-align:center;top:36.69px;font-size:11px;color:#5876b6;">Ventas</div>
<div class="a" style="left:1590px;top:73px;width:88px;height:22px;border:1px solid #a2b6d4;border-radius:3px;background:linear-gradient(#d2ddec 0,#c6d4e8 58%,#a6c6ee 60%,#bcd5f3 100%);box-shadow:inset 0 1px 0 #e2eaf5;"></div>
<div class="t" style="left:1240px;top:56.69px;font-size:11px;color:#2e3846;">Observaciones</div>
<div class="t" style="left:1240px;top:78.69px;font-size:11px;color:#2e3846;">Anotaciones</div>
<div class="t" style="left:1240px;top:100.69px;font-size:11px;color:#2e3846;">Contacto</div>
<div class="t" style="left:1351px;top:56.69px;font-size:11px;color:#2e3846;">Direcciones</div>
<div class="t" style="left:1351px;top:78.69px;font-size:11px;color:#2e3846;">I.B.A.N.</div>
<div class="t" style="left:1351px;top:100.69px;font-size:11px;color:#2e3846;">Contabilidad</div>
<div class="t" style="left:1450px;top:56.69px;font-size:11px;color:#2e3846;">Avisos</div>
<div class="t" style="left:1528px;top:56.69px;font-size:11px;color:#2e3846;">Contratos</div>
<div class="t" style="left:1450px;top:78.69px;font-size:11px;color:#2e3846;">Llamadas</div>
<div class="t" style="left:1450px;top:100.69px;font-size:11px;color:#2e3846;">Visitas</div>
<div class="t" style="left:1614px;top:56.69px;font-size:11px;color:#2e3846;">Precios</div>
<div class="t" style="left:1614px;top:78.69px;font-size:11px;color:#111;">5 Albaranes</div>
<div class="t" style="left:1614px;top:100.69px;font-size:11px;color:#2e3846;">3 Facturas</div>
<svg style="left:1220px;top:57px" width="15.0" height="10.0" viewBox="0 0 15 10"><path d="M1.5 5.6 Q7.5 11.2 13.5 5.6" fill="none" stroke="#c9cdd2" stroke-width="0.7"/>
<path d="M2 5.4 Q7.5 0.5 13 5.4 Q7.5 10.5 2 5.4Z" fill="#fff"/>
<path d="M0.6 4.9 Q7.5 -3.6 14.4 4.9" fill="none" stroke="#6a737a" stroke-width="1.1"/>
<circle cx="7.5" cy="5.5" r="2.9" fill="#14a3b6"/><circle cx="7.5" cy="5.5" r="1.3" fill="#0a6776"/></svg>
<svg style="left:1220px;top:77px" width="14" height="14" viewBox="0 0 14 14"><circle cx="7" cy="7" r="7" fill="#2a8de6"/><rect x="6.1" y="6" width="1.9" height="5" fill="#fff"/><circle cx="7" cy="4" r="1.05" fill="#fff"/></svg>
<svg style="left:1220px;top:99px" width="15" height="14" viewBox="0 0 15 14"><path d="M0 6.5 L15 0 L8 14 L6.5 8.5Z" fill="#2f88e0"/><path d="M6.5 8.5 L15 0 L8 14Z" fill="#1d64b5"/><path d="M0 6.5 L6.5 8.5 L15 0Z" fill="#8fc6f5"/></svg>
<svg style="left:1331px;top:54.5px" width="15" height="15" viewBox="0 0 15 15"><circle cx="7.5" cy="7.5" r="7.3" fill="#2f96dc"/><path d="M1.5 5 Q3 1.5 6.5 1.8 Q8 3.5 6.3 5.5 Q4.5 7.5 5.5 10 Q6 12 4.5 12.5 Q1.5 10.5 1.2 7Z" fill="#c8d832"/><path d="M9.5 2 Q12.5 2.5 13.8 5.5 Q12 6.5 10.5 5.5Z M9.8 8.5 Q12.5 7.5 13.5 9.5 Q12 13 9.5 13 Q9 10.5 9.8 8.5Z" fill="#c8d832"/></svg>
<svg style="left:1331px;top:77px" width="15" height="14" viewBox="0 0 15 14"><rect x="1" y="0" width="13" height="9" rx="1" fill="#5c8fd6"/><rect x="0" y="3" width="13" height="10" rx="1" fill="#3d5fb0"/><rect x="0" y="5" width="13" height="2" fill="#24407e"/><rect x="9" y="9" width="3" height="2" fill="#f2b33d"/></svg>
<svg style="left:1331px;top:98px" width="15" height="15" viewBox="0 0 15 15"><g fill="none" stroke="#d19a2a" stroke-width="0.9"><path d="M1 3.5 Q7.5 1.5 14 3.5"/><path d="M2.5 3.5 L0.6 10.5 M2.5 3.5 L4.4 10.5 M12.5 3.5 L10.6 10.5 M12.5 3.5 L14.4 10.5"/></g>
<rect x="6.8" y="1" width="1.4" height="12" fill="#f2bd3c"/><path d="M0.3 10.5 H4.7 Q4.5 13 2.5 13 Q0.5 13 0.3 10.5Z M10.3 10.5 H14.7 Q14.5 13 12.5 13 Q10.5 13 10.3 10.5Z" fill="#f2bd3c"/><rect x="4.5" y="13.3" width="6" height="1.4" fill="#d19a2a"/></svg>
<svg style="left:1431px;top:56px" width="15.0" height="13.0" viewBox="0 0 15 13"><rect x="0.5" y="1" width="14" height="3.6" rx="0.8" fill="#e53935"/>
<circle cx="4" cy="1.6" r="0.7" fill="#fbe4e4"/><circle cx="7.5" cy="1.6" r="0.7" fill="#fbe4e4"/><circle cx="11" cy="1.6" r="0.7" fill="#fbe4e4"/>
<rect x="1" y="4.6" width="13" height="8" fill="#f3f3f3"/>
<g fill="#a9a9a9"><rect x="3" y="6" width="9" height="0.6"/><rect x="3" y="8.2" width="9" height="0.6"/><rect x="3" y="10.4" width="9" height="0.6"/>
<rect x="4.5" y="5.5" width="0.6" height="6"/><rect x="7.2" y="5.5" width="0.6" height="6"/><rect x="9.9" y="5.5" width="0.6" height="6"/></g>
<rect x="7.5" y="8" width="1.8" height="2" fill="#e53935"/></svg>
<svg style="left:1508px;top:55px" width="16" height="15" viewBox="0 0 16 15"><path d="M7 5.5 L14.3 12.8" stroke="#4e4a4a" stroke-width="1.6"/><path d="M1.5 4.8 L6.3 0.5 L9.6 3.8 L4.8 8.1Z" fill="#f3b22e"/><path d="M1.5 4.8 L6.3 0.5 L7.2 1.4 L2.4 5.7Z" fill="#5d4a3a"/><path d="M3.9 7.2 L8.7 2.9 L9.6 3.8 L4.8 8.1Z" fill="#5d4a3a"/><rect x="0.5" y="12" width="8.5" height="2.3" fill="#8a5a3c"/></svg>
<svg style="left:1431px;top:77px" width="14" height="14" viewBox="0 0 14 14"><path d="M2.5 0.5 L5 3.5 L3.8 5.2 Q5.5 8.8 8.8 10.2 L10.5 9 L13.5 11.5 L12 13.5 Q5 13 0.5 2Z" fill="#0e9c73"/></svg>
<svg style="left:1429px;top:100.5px" width="17" height="10" viewBox="0 0 17 10"><path d="M0.5 6 Q0.8 4.3 3 4 L5.5 1.2 Q6.5 0.3 8.5 0.3 H10.5 Q12.5 0.3 13.5 1.5 L15 4 Q16.5 4.5 16.5 6.3 V8 H0.5Z" fill="#8e9ad0"/><path d="M5.8 1.6 L4.8 4 H8.2 V1.3Z M9.2 1.3 V4 H13.5 L12.2 1.8Z" fill="#3c4a78"/><circle cx="4.3" cy="8.2" r="1.7" fill="#2d3550"/><circle cx="12.8" cy="8.2" r="1.7" fill="#2d3550"/></svg>
<svg style="left:1594px;top:55px" width="17" height="15" viewBox="0 0 17 15"><path d="M0.5 1.5 H3 L5 10.5 H14 L16 4.5 H4" fill="none" stroke="#17a08a" stroke-width="1.6"/><circle cx="6" cy="13" r="1.5" fill="#17a08a"/><circle cx="13" cy="13" r="1.5" fill="#17a08a"/><path d="M8 3 H12 M10.5 1.5 L12.3 3 L10.5 4.5" fill="none" stroke="#3a70d0" stroke-width="1.2"/></svg>
<svg style="left:1595px;top:78px" width="14" height="12" viewBox="0 0 14 12"><rect x="0" y="0" width="14" height="12" rx="0.5" fill="#c3c0ee"/><rect x="1" y="1.2" width="12" height="1" fill="#8e8ad8"/><rect x="1.5" y="4" width="11" height="3.2" fill="#f4f4fc"/><rect x="1.5" y="8.2" width="11" height="1.2" fill="#e8e8fa"/><rect x="9" y="10.5" width="3" height="0.8" fill="#8e8ad8"/></svg>
<svg style="left:1596px;top:98px" width="12" height="15" viewBox="0 0 12 15"><rect x="0.5" y="0.5" width="11" height="14" fill="#e4e6fa" stroke="#9a9ce6" stroke-width="1"/><path d="M3 4 H9 M3 7 H9 M3 10 H9" stroke="#7b7fd8" stroke-width="1"/><text x="6" y="10" font-size="7" text-anchor="middle" fill="#5c60c8" font-family="Liberation Sans">€</text></svg>
<div class="a" style="left:1209px;top:131px;width:707px;height:28px;border:1px solid #a5b4c9;background:linear-gradient(#dfe9f6 0,#d5e1f1 55%,#cad8eb 100%);box-shadow:inset 0 1px 0 #f2f7fd;"></div>
<svg style="left:1215px;top:136px" width="17" height="17" viewBox="0 0 17 17"><path d="M2.6 14.4 L13.2 3.8" stroke="#f3a21f" stroke-width="3.4" stroke-linecap="butt"/><path d="M3 13.6 L12.6 4" stroke="#f8c040" stroke-width="1" opacity="0.7"/><path d="M13.2 3.8 L14.8 2.2" stroke="#d9a0ae" stroke-width="3.4"/><path d="M2.6 14.4 L1.2 15.8" stroke="#f2d39a" stroke-width="3"/><circle cx="1.9" cy="15.2" r="1.1" fill="#3a2a1a"/></svg>
<div class="t" style="left:1236px;top:139.69px;font-size:11px;color:#34404f;">Modificar</div>
<svg style="left:1293px;top:139px" width="12" height="12" viewBox="0 0 12 12"><path d="M1 1L11 11M11 1L1 11" stroke="#e04848" stroke-width="2.2"/></svg>
<div class="t" style="left:1311px;top:139.69px;font-size:11px;color:#34404f;">Archivar</div>
<svg style="left:1358px;top:143px" width="7" height="4" viewBox="0 0 7 4"><path d="M0 0H7L3.5 4Z" fill="#111"/></svg>
<div class="t" style="right:31px;top:139.19px;font-size:11px;color:#5470a3;font-weight:bold;">402,50 €</div>
<svg style="left:1894.8px;top:137.8px" width="13.6" height="13.6" viewBox="0 0 14 14"><path d="M6.30 2.05 A5 5 0 0 0 3.28 10.35" fill="none" stroke="#ec8a22" stroke-width="1.9"/><path d="M4.78 12.01 L1.16 10.97 L4.13 8.29Z" fill="#ec8a22"/><path d="M7.70 11.95 A5 5 0 0 0 10.72 3.65" fill="none" stroke="#ec8a22" stroke-width="1.9"/><path d="M9.22 1.99 L12.84 3.03 L9.87 5.71Z" fill="#ec8a22"/></svg>
<div class="a" style="left:1208px;top:159px;width:1px;height:843px;background:#c6dbf6;"></div>
<div class="a" style="left:1209px;top:159px;width:707px;height:843px;border:1px solid #a3b5cd;border-top:none;background:#fff;"></div>
<div class="a" style="left:1212px;top:221px;width:703px;height:1px;background:#e6e8ea;"></div>
<div class="t" style="left:1213px;top:163.00px;font-size:13px;color:#111;"><b>A1/1386</b> • 13/02/2020</div>
<div class="t" style="left:1213px;top:185.00px;font-size:13px;color:#111;">Luis Perez Sanchez</div>
<div class="t" style="left:1213px;top:205.00px;font-size:13px;color:#243d7e;font-weight:bold;">Registrado</div>
<div class="t" style="left:1288px;top:209.73px;font-size:8px;color:#9a9a9a;">Empresa de Prueba SA • A96740956</div>
<div class="t" style="right:7px;top:205.00px;font-size:13px;color:#111;font-weight:bold;">0 €</div>
<svg style="left:1894.5px;top:165px" width="12.5" height="12.5" viewBox="0 0 13 13"><circle cx="6.5" cy="3.2" r="3" fill="#ffa726"/><path d="M0 13 V11.5 Q0 7.2 6.5 7.2 Q13 7.2 13 11.5 V13Z" fill="#546e7a"/></svg>
<div class="a" style="left:1212px;top:283px;width:703px;height:1px;background:#e6e8ea;"></div>
<div class="t" style="left:1213px;top:226.00px;font-size:13px;color:#111;"><b>A1/1385</b> • 13/02/2020</div>
<div class="t" style="left:1213px;top:247.00px;font-size:13px;color:#111;">Luis Perez Sanchez</div>
<div class="t" style="left:1213px;top:267.00px;font-size:13px;color:#243d7e;font-weight:bold;">Registrado</div>
<div class="t" style="left:1288px;top:271.73px;font-size:8px;color:#9a9a9a;">Empresa de Prueba SA • A96740956</div>
<div class="t" style="right:7px;top:267.00px;font-size:13px;color:#111;font-weight:bold;">61,71 €</div>
<svg style="left:1872px;top:225.5px" width="17" height="14" viewBox="0 0 17 14"><path d="M3 11 Q1 6 4 2 Q6.5 -0.5 6 3 Q5 7 2.5 10 M5 7 Q8 4.5 9 6.5 Q7 8.5 8.8 8.5 Q10.5 7 11.5 6 Q11 8.5 12.3 8.2 Q14 7 16 5.8" fill="none" stroke="#222" stroke-width="0.9"/><rect x="1" y="12.5" width="15" height="0.8" fill="#222"/></svg>
<svg style="left:1894.5px;top:228px" width="12.5" height="12.5" viewBox="0 0 13 13"><circle cx="6.5" cy="3.2" r="3" fill="#ffa726"/><path d="M0 13 V11.5 Q0 7.2 6.5 7.2 Q13 7.2 13 11.5 V13Z" fill="#546e7a"/></svg>
<div class="a" style="left:1212px;top:346px;width:703px;height:1px;background:#e6e8ea;"></div>
<div class="t" style="left:1213px;top:288.00px;font-size:13px;color:#111;"><b>A1/1384</b> • 13/02/2020</div>
<div class="t" style="left:1213px;top:309.00px;font-size:13px;color:#111;">Luis Perez Sanchez</div>
<div class="t" style="left:1213px;top:329.00px;font-size:13px;color:#243d7e;font-weight:bold;">Registrado</div>
<div class="t" style="left:1288px;top:333.73px;font-size:8px;color:#9a9a9a;">Empresa de Prueba SA • A96740956</div>
<div class="t" style="right:7px;top:329.00px;font-size:13px;color:#111;font-weight:bold;">64,13 €</div>
<svg style="left:1872px;top:287.5px" width="17" height="14" viewBox="0 0 17 14"><path d="M3 11 Q1 6 4 2 Q6.5 -0.5 6 3 Q5 7 2.5 10 M5 7 Q8 4.5 9 6.5 Q7 8.5 8.8 8.5 Q10.5 7 11.5 6 Q11 8.5 12.3 8.2 Q14 7 16 5.8" fill="none" stroke="#222" stroke-width="0.9"/><rect x="1" y="12.5" width="15" height="0.8" fill="#222"/></svg>
<svg style="left:1894.5px;top:290px" width="12.5" height="12.5" viewBox="0 0 13 13"><circle cx="6.5" cy="3.2" r="3" fill="#ffa726"/><path d="M0 13 V11.5 Q0 7.2 6.5 7.2 Q13 7.2 13 11.5 V13Z" fill="#546e7a"/></svg>
<div class="a" style="left:1210px;top:347px;width:705px;height:62px;background:#dff8dc;"></div>
<div class="a" style="left:1212px;top:408px;width:703px;height:1px;background:#e6e8ea;"></div>
<div class="t" style="left:1213px;top:351.00px;font-size:13px;color:#111;"><b>A/121</b> • 27/09/2017</div>
<div class="t" style="left:1213px;top:372.00px;font-size:13px;color:#111;">Luis Perez Sanchez</div>
<div class="t" style="left:1213px;top:392.00px;font-size:13px;color:#243d7e;font-weight:bold;">Facturado</div>
<div class="t" style="left:1283px;top:396.73px;font-size:8px;color:#9a9a9a;">NebuGoa • 12345675A</div>
<div class="t" style="right:7px;top:392.00px;font-size:13px;color:#111;font-weight:bold;">269,36 €</div>
<svg style="left:1874px;top:352px" width="13" height="13" viewBox="0 0 13 13"><path d="M0.6 7.6 L7.3 0.9 H12.2 V5.8 L5.5 12.5Z" fill="#3c48b8"/><path d="M0.6 7.6 L7.3 0.9 H12.2 L5.5 7.6Z" fill="#4a56c8" opacity="0.6"/><circle cx="9.8" cy="3.2" r="0.9" fill="#c8ccf6"/><path d="M4 8.8 Q4.6 6.6 6.8 6" fill="none" stroke="#e8ecff" stroke-width="0.9"/></svg>
<svg style="left:1893px;top:355.5px" width="16" height="7" viewBox="0 0 16 7"><ellipse cx="4" cy="3.5" rx="3.2" ry="2.6" fill="#bfeefa" stroke="#2a6aa0" stroke-width="1.4"/><ellipse cx="12" cy="3.5" rx="3.2" ry="2.6" fill="#bfeefa" stroke="#2a6aa0" stroke-width="1.4"/><rect x="6.6" y="2.9" width="2.8" height="1.3" fill="#2f86d0"/></svg>
<div class="a" style="left:1210px;top:409px;width:705px;height:63px;background:#dff8dc;"></div>
<div class="a" style="left:1212px;top:471px;width:703px;height:1px;background:#e6e8ea;"></div>
<div class="t" style="left:1213px;top:413.00px;font-size:13px;color:#111;"><b>A/120</b> • 27/09/2017</div>
<div class="t" style="left:1213px;top:434.00px;font-size:13px;color:#111;">Luis Perez Sanchez</div>
<div class="t" style="left:1213px;top:454.00px;font-size:13px;color:#243d7e;font-weight:bold;">Facturado</div>
<div class="t" style="left:1283px;top:458.73px;font-size:8px;color:#9a9a9a;">NebuGoa • 12345675A</div>
<div class="t" style="right:7px;top:454.00px;font-size:13px;color:#111;font-weight:bold;">7,30 €</div>
<svg style="left:1853.5px;top:414px" width="13" height="13" viewBox="0 0 13 13"><path d="M0.6 7.6 L7.3 0.9 H12.2 V5.8 L5.5 12.5Z" fill="#3c48b8"/><path d="M0.6 7.6 L7.3 0.9 H12.2 L5.5 7.6Z" fill="#4a56c8" opacity="0.6"/><circle cx="9.8" cy="3.2" r="0.9" fill="#c8ccf6"/><path d="M4 8.8 Q4.6 6.6 6.8 6" fill="none" stroke="#e8ecff" stroke-width="0.9"/></svg>
<svg style="left:1873.5px;top:415px" width="12.5" height="12.5" viewBox="0 0 13 13"><circle cx="6.5" cy="3.2" r="3" fill="#ffa726"/><path d="M0 13 V11.5 Q0 7.2 6.5 7.2 Q13 7.2 13 11.5 V13Z" fill="#546e7a"/></svg>
<svg style="left:1893px;top:417.5px" width="16" height="7" viewBox="0 0 16 7"><ellipse cx="4" cy="3.5" rx="3.2" ry="2.6" fill="#bfeefa" stroke="#2a6aa0" stroke-width="1.4"/><ellipse cx="12" cy="3.5" rx="3.2" ry="2.6" fill="#bfeefa" stroke="#2a6aa0" stroke-width="1.4"/><rect x="6.6" y="2.9" width="2.8" height="1.3" fill="#2f86d0"/></svg>
</div></body></html>
